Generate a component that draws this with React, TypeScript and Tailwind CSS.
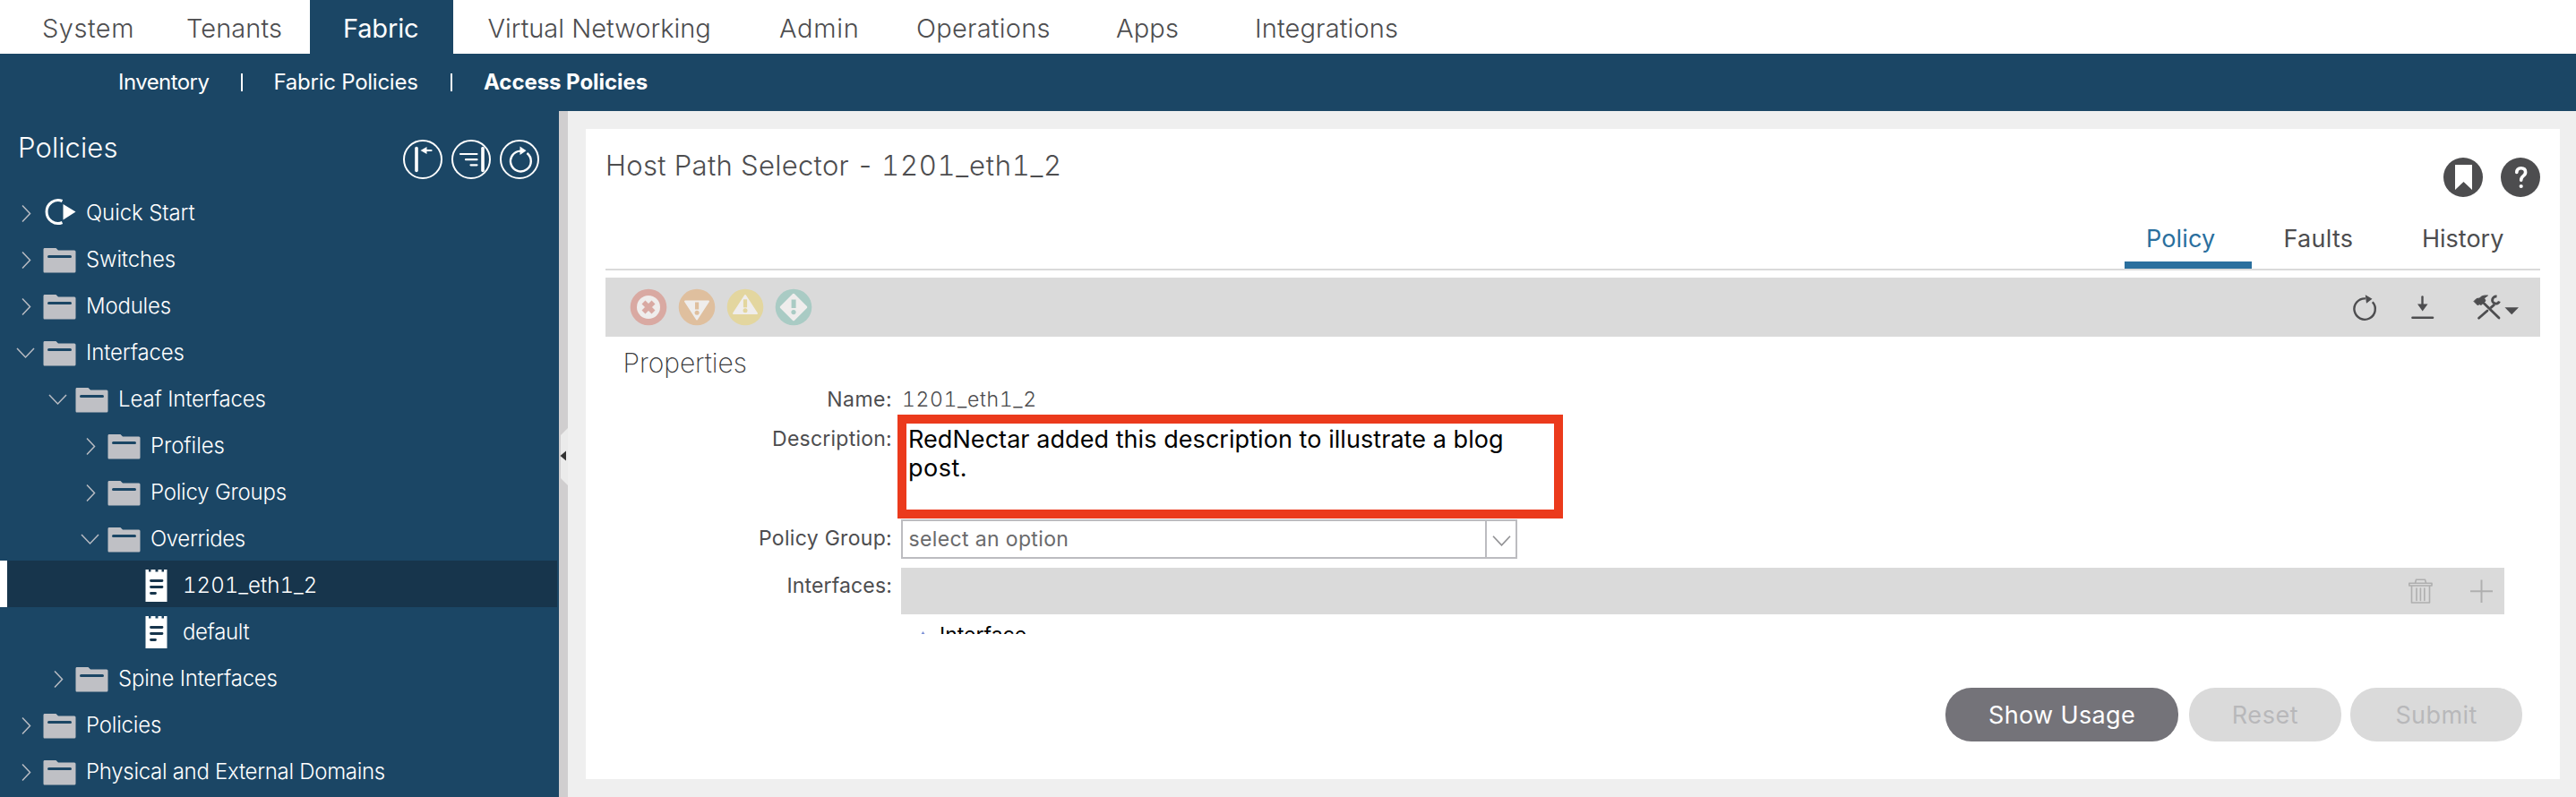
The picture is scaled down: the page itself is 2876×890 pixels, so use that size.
import React from "react";

type Kind = "closed" | "open" | "leaf";

interface TreeNode {
  label: string;
  depth: number;
  kind: Kind;
  icon: "folder" | "start" | "doc";
  selected?: boolean;
  text: string;
}

const NAV = [
  { label: "System", box: "w-[208px] pl-[47px] tracking-[0.5px]" },
  { label: "Tenants", box: "w-[138px] tracking-[0.1px]" },
  { label: "Fabric", box: "w-[160px] mr-[38.5px] pl-[37px] bg-[#1b4665] font-normal text-white tracking-[-0.17px]" },
  { label: "Virtual Networking", box: "w-[325.5px] tracking-[-0.01px]" },
  { label: "Admin", box: "w-[153px] tracking-[0.7px]" },
  { label: "Operations", box: "w-[223px] tracking-[0.24px]" },
  { label: "Apps", box: "w-[155px] tracking-[0.18px]" },
  { label: "Integrations", box: "tracking-[0.15px]" },
];

const TREE: TreeNode[] = [
  { label: "Quick Start", depth: 0, kind: "closed", icon: "start", text: "tracking-[-0.1px]" },
  { label: "Switches", depth: 0, kind: "closed", icon: "folder", text: "tracking-[-0.15px]" },
  { label: "Modules", depth: 0, kind: "closed", icon: "folder", text: "tracking-[-0.2px]" },
  { label: "Interfaces", depth: 0, kind: "open", icon: "folder", text: "tracking-[-0.12px]" },
  { label: "Leaf Interfaces", depth: 1, kind: "open", icon: "folder", text: "tracking-[-0.15px]" },
  { label: "Profiles", depth: 2, kind: "closed", icon: "folder", text: "tracking-[-0.05px]" },
  { label: "Policy Groups", depth: 2, kind: "closed", icon: "folder", text: "tracking-[-0.22px]" },
  { label: "Overrides", depth: 2, kind: "open", icon: "folder", text: "tracking-[-0.36px]" },
  { label: "1201_eth1_2", depth: 3, kind: "leaf", icon: "doc", selected: true, text: "tabular-nums tracking-[0.05px]" },
  { label: "default", depth: 3, kind: "leaf", icon: "doc", text: "tracking-[-0.37px]" },
  { label: "Spine Interfaces", depth: 1, kind: "closed", icon: "folder", text: "tracking-[-0.21px]" },
  { label: "Policies", depth: 0, kind: "closed", icon: "folder", text: "tracking-[-0.2px]" },
  { label: "Physical and External Domains", depth: 0, kind: "closed", icon: "folder", text: "tracking-[-0.29px]" },
];

const INDENT = ["pl-[17.5px]", "pl-[53.5px]", "pl-[89.5px]", "pl-[125.5px]"];

function Chevron({ kind }: { kind: Kind }) {
  return (
    <svg className="h-[22px] w-[22px] shrink-0" viewBox="0 0 22 22" fill="none" stroke="#b9bcc3" strokeWidth="1.5">
      {kind === "closed" && <path d="M7 2.5 L15.5 11.5 L7 20.5" />}
      {kind === "open" && <path d="M1 6 L10.5 16 L20 6" />}
    </svg>
  );
}

function NodeIcon({ icon }: { icon: TreeNode["icon"] }) {
  if (icon === "start")
    return (
      <svg className="h-[38px] w-[37px] shrink-0" viewBox="0 0 37 38">
        <path d="M21.5 5.5 A12.6 13 0 1 0 21.5 29.5" fill="none" stroke="#fff" strokeWidth="3" />
        <path d="M22.5 9 L36.5 17.5 L22.5 26.5 Z" fill="#fff" />
      </svg>
    );
  if (icon === "folder")
    return (
      <svg className="h-[38px] w-[37px] shrink-0" viewBox="0 0 37 38">
        <path d="M1.5 6 H14.5 L17 8.5 H35 Q36.5 8.5 36.5 10 V32 Q36.5 33.5 35 33.5 H1.5 Q0.5 33.5 0.5 32 V7.5 Q0.5 6 1.5 6Z" fill="#bfc0c5" />
        <path d="M6.5 15.5 H30.5" stroke="#1b4665" strokeWidth="3" strokeLinecap="round" />
      </svg>
    );
  return (
    <svg className="h-[38px] w-[37px] shrink-0" viewBox="0 0 37 38">
      <path d="M6.5 1 H10 V3.5 H12.5 V1 H17.5 V3.5 H20.5 V1 H24.5 V3.5 H27 V1 H30.5 V37 H6.5 Z" fill="#fff" />
      <path d="M12.5 13.5 H25 M12.5 20.5 H25 M12.5 27.5 H17.5" stroke="#17354c" strokeWidth="2.8" strokeLinecap="round" />
    </svg>
  );
}

function TreeRow({ node }: { node: TreeNode }) {
  return (
    <div
      className={
        "flex h-[52px] shrink-0 items-center mr-[2px] " +
        (node.selected ? "bg-[#17354c] shadow-[inset_8px_0_0_#fff] " : "") +
        INDENT[node.depth]
      }
    >
      <div className="flex items-center gap-2 pt-[4px]">
        <Chevron kind={node.kind} />
        <NodeIcon icon={node.icon} />
      </div>
      <span className={"whitespace-nowrap pt-[4.5px] text-[24px] font-light leading-none text-white pl-[11.5px] " + node.text}>
        {node.label}
      </span>
    </div>
  );
}

function SidebarTools() {
  return (
    <svg className="h-[44px] w-[152px]" viewBox="0 0 152 44" fill="none" stroke="#fff" strokeWidth="2">
      <circle cx="22" cy="22" r="21" />
      <circle cx="76" cy="22" r="21" />
      <circle cx="130" cy="22" r="21" />
      <path d="M15 9.5 V34.5" strokeWidth="3.6" strokeLinecap="round" />
      <path d="M26 12 H31.5" strokeLinecap="round" strokeWidth="2.2" />
      <path d="M19.5 12 L26.5 8 V16 Z" fill="#fff" stroke="none" />
      <path d="M89 9.5 V34.5" strokeWidth="3.6" strokeLinecap="round" />
      <path d="M64 16 H82.5 M70 22.2 H82.5 M75.5 28.3 H82.5" strokeLinecap="round" strokeWidth="2.2" />
      <path d="M138.4 15 A11.4 11.4 0 1 1 131 12.6" strokeWidth="2.4" />
      <path d="M130.5 7.5 L137.5 12.2 L130.5 17 Z" fill="#fff" stroke="none" />
    </svg>
  );
}

function SeverityIcons() {
  return (
    <svg className="h-[42px] w-[204px]" viewBox="0 0 204 42">
      <g>
        <circle cx="21" cy="21" r="20.3" fill="#d9a9a2" />
        <circle cx="21" cy="21" r="13" fill="#efedec" />
        <path d="M15.5 15.5 L26.5 26.5 M26.5 15.5 L15.5 26.5" stroke="#d9a9a2" strokeWidth="5.6" />
      </g>
      <g>
        <circle cx="75" cy="21" r="20.3" fill="#dfbf9e" />
        <path d="M62 14.5 H88 L75 34.5 Z" fill="#efedec" stroke="#efedec" strokeWidth="2" strokeLinejoin="round" />
        <path d="M73 15.5 H77.2 V23.5 H73 Z" fill="#dfbf9e" />
        <circle cx="75.1" cy="27.2" r="2.5" fill="#dfbf9e" />
      </g>
      <g>
        <circle cx="129" cy="21" r="20.3" fill="#e3d69f" />
        <path d="M129 8 L142 28 H116 Z" fill="#efedec" stroke="#efedec" strokeWidth="2" strokeLinejoin="round" />
        <path d="M126.9 12.3 H131.1 V21.3 H126.9 Z" fill="#e3d69f" />
        <circle cx="129" cy="24.8" r="2.5" fill="#e3d69f" />
      </g>
      <g>
        <circle cx="183" cy="21" r="20.3" fill="#a9cbc4" />
        <path d="M183 7 L197 21 L183 35 L169 21 Z" fill="#efedec" stroke="#efedec" strokeWidth="2.5" strokeLinejoin="round" />
        <path d="M180.6 12.5 H185.6 V22 H180.6 Z" fill="#a9cbc4" />
        <circle cx="183" cy="26.6" r="2.6" fill="#a9cbc4" />
      </g>
    </svg>
  );
}

function ToolbarActions() {
  return (
    <svg className="h-[40px] w-[190px] text-[#4d4d4f]" viewBox="2625 324 190 40">
      <g transform="translate(2627 329.5)">
        <path d="M21.8 8.7 A11.7 11.7 0 1 1 14 4.9" fill="none" stroke="currentColor" strokeWidth="2.4" />
        <path d="M13.8 0.8 L21.5 5.2 L15 10.2 Z" fill="currentColor" />
      </g>
      <path d="M2704.5 332.5 V342" stroke="currentColor" strokeWidth="2.4" strokeLinecap="round" />
      <path d="M2699 340.5 H2710.5 L2704.7 348.5 Z" fill="currentColor" />
      <path d="M2693.5 355.8 H2716" stroke="currentColor" strokeWidth="2.6" strokeLinecap="round" />
      <path d="M2772 338.5 L2790 356" stroke="currentColor" strokeWidth="2.8" strokeLinecap="round" />
      <path d="M2777 348 L2767.5 356.2" stroke="currentColor" strokeWidth="2.8" strokeLinecap="round" />
      <path d="M2785 341 L2780.5 345" stroke="currentColor" strokeWidth="3" />
      <path d="M2762 337.5 L2765 334.5 L2768.5 334 Q2770.5 330.5 2777.5 331 L2773.5 334 L2775 337 L2770 341.5 L2768 340.5 L2766.5 342 Z" fill="currentColor" stroke="currentColor" strokeWidth="1" strokeLinejoin="round" />
      <path d="M2787.5 332.2 A4 4 0 1 0 2790.4 337.4" fill="none" stroke="currentColor" strokeWidth="3" />
      <path d="M2796.5 344.2 H2812 L2804.2 352.3 Z" fill="currentColor" />
    </svg>
  );
}

function RoundButtons() {
  return (
    <div className="flex gap-5">
      <svg className="size-[44px]" viewBox="0 0 44 44">
        <circle cx="22" cy="22" r="22" fill="#4d4d4f" />
        <path d="M13 8 H32 V36 L22.5 27 L13 36 Z" fill="#fff" />
      </svg>
      <svg className="size-[44px]" viewBox="0 0 44 44">
        <circle cx="22" cy="22" r="22" fill="#4d4d4f" />
        <path d="M17.8 16.5 Q18 11.7 22.6 11.7 Q27.6 11.7 27.6 16.2 Q27.6 18.7 25 20.6 Q22.7 22.3 22.7 25.3" fill="none" stroke="#fff" strokeWidth="3.6" strokeLinecap="round" />
        <circle cx="22.7" cy="32" r="2.1" fill="#fff" />
      </svg>
    </div>
  );
}

function Header() {
  return (
    <header className="shrink-0 bg-[#1b4665]">
      <nav className="flex h-[60px] bg-white">
        {NAV.map((n) => (
          <div key={n.label} className={"flex shrink-0 items-center whitespace-nowrap pt-[3px] text-[29px] leading-none " + (n.label === "Fabric" ? "" : "font-light text-[#4d4d4f] ") + n.box}>
            {n.label}
          </div>
        ))}
      </nav>
      <div className="flex h-[64px] items-center whitespace-nowrap pl-[132px] text-[24px] leading-none text-white">
        <span className="w-[137px] tracking-[-0.55px]">Inventory</span>
        <span className="h-5 w-[2px] bg-white" />
        <span className="w-[198px] pl-[34.5px] tracking-[-0.25px]">Fabric Policies</span>
        <span className="ml-[34px] h-5 w-[2px] bg-white" />
        <span className="pl-[35px] font-bold tracking-[-0.05px]">Access Policies</span>
      </div>
    </header>
  );
}

function Sidebar() {
  return (
    <aside className="flex w-[624px] shrink-0 flex-col overflow-hidden bg-[#1b4665]">
      <div className="flex h-[86px] shrink-0 items-start justify-between pl-5 pr-[22px] text-white">
        <span className="pt-[25px] text-[31px] font-light leading-none tracking-[0.1px]">Policies</span>
        <div className="pt-8">
          <SidebarTools />
        </div>
      </div>
      {TREE.map((n, i) => (
        <TreeRow key={i} node={n} />
      ))}
    </aside>
  );
}

function Splitter() {
  return (
    <div className="w-[10px] shrink-0 bg-[#d0cecf] pt-[353px]">
      <svg className="h-[66px] w-[10px]" viewBox="0 0 10 66">
        <path d="M2 9 L10 1 V65 L2 57 Z" fill="#ebebeb" />
        <path d="M8 26.5 L1.5 32 L8 37.5 Z" fill="#333" />
      </svg>
    </div>
  );
}

function Tabs() {
  return (
    <div className="flex items-start justify-end whitespace-nowrap border-b-2 border-[#dadada] text-[27px] leading-none text-[#4d4d4f]">
      <div className="h-[48px] w-[142px] border-b-8 border-[#2a6f9e] pl-[24px] pt-px text-[#2a6f9e] tracking-[0.15px]">Policy</div>
      <div className="w-[190px] pl-[35.5px] pt-px tracking-[0.28px]">Faults</div>
      <div className="w-[132px] pt-px">History</div>
    </div>
  );
}

const LABEL = "w-[320px] shrink-0 text-right text-[23px] leading-none text-[#4d4d4f] ";

function Properties() {
  return (
    <section className="flex h-[332px] flex-col overflow-hidden">
      <h2 className="h-[58px] shrink-0 pl-[19.5px] pt-[14px] text-[30px] font-extralight leading-none tracking-[-0.05px] text-[#3a3a3c]">Properties</h2>
      <div className="flex h-[29px] shrink-0 whitespace-nowrap">
        <div className={LABEL + "pt-px tracking-[0.45px]"}>Name:</div>
        <div className="pl-[11px] pt-px text-[23px] font-light leading-none text-[#4d4d4f] tabular-nums tracking-[0.65px]">1201_eth1_2</div>
      </div>
      <div className="flex h-[116px] shrink-0">
        <div className={LABEL + "pt-[16px] tracking-[0.24px]"}>Description:</div>
        <div className="ml-[6px] h-[116px] w-[743px] border-10 border-[#eb3a1c] bg-white pl-[2px] pt-[2px] text-[27px] leading-[32px] tracking-[0.06px] text-black">
          RedNectar added this description to illustrate a blog
          <br />
          <span className="tracking-[0.5px]">post.</span>
        </div>
      </div>
      <div className="mt-px flex h-[54px] shrink-0">
        <div className={LABEL + "pt-[9.5px] tracking-[0.3px]"}>Policy Group:</div>
        <div className="ml-[10px] flex h-[44px] w-[688px] border-2 border-[#bcbcc0] bg-white">
          <div className="grow pl-[6.5px] pt-[9px] text-[23px] leading-none tracking-[0.36px] text-[#6a6a6c]">select an option</div>
          <div className="flex w-[34px] items-center justify-center border-l-2 border-[#bcbcc0]">
            <svg className="mt-[4px] h-[12px] w-[21px]" viewBox="0 0 21 12" fill="none" stroke="#909093" strokeWidth="1.6">
              <path d="M1 0.8 L10.5 10.8 L20 0.8" />
            </svg>
          </div>
        </div>
      </div>
      <div className="flex grow">
        <div className={LABEL + "pt-[9px] tracking-[0.15px]"}>Interfaces:</div>
        <div className="ml-[10px] w-[1790px]">
          <div className="flex h-[52px] items-start justify-end bg-[#dadada] pr-[12px] pt-[12px]">
            <svg className="h-[28px] w-[96px]" viewBox="0 0 96 28" fill="none" stroke="#afafaf" strokeWidth="1.6">
              <path d="M1.8 5.2 H27 V8 H1.8 Z M8.5 5 L9.5 1.2 H19.5 L20.5 5 M4.5 8.2 V27 H24.5 V8.2" strokeLinejoin="round" />
              <path d="M10 11 V24.5 M14.4 11 V24.5 M18.8 11 V24.5" strokeLinecap="round" />
              <path d="M70 14.3 H95 M82.5 1.5 V27" strokeWidth="2" />
            </svg>
          </div>
          <div className="flex items-start pl-[20px] pt-[12px]">
            <svg className="mt-[7px] h-[8px] w-[9px]" viewBox="0 0 9 8">
              <path d="M4.5 0 L9 7 H0 Z" fill="#7a8fd6" />
            </svg>
            <span className="pl-[14px] text-[23px] leading-none text-black">Interface</span>
          </div>
        </div>
      </div>
    </section>
  );
}

function Footer() {
  return (
    <div className="flex h-[60px] items-center whitespace-nowrap pl-[1496px] text-[27px] leading-none">
      <button className="flex h-full w-[260px] items-center justify-center rounded-[29px] bg-[#747379] tracking-[0.36px] text-white">Show Usage</button>
      <button className="ml-3 flex h-full w-[170px] items-center justify-center rounded-[29px] bg-[#dadada] tracking-[0.57px] text-[#b8b8ba]">Reset</button>
      <button className="ml-[10px] flex h-full w-[192px] items-center justify-center rounded-[29px] bg-[#dadada] tracking-[0.4px] text-[#b8b8ba]">Submit</button>
    </div>
  );
}

function MainCard() {
  return (
    <main className="flex h-[726px] w-[2204px] flex-col bg-white pl-[22px] pr-[22px]">
      <div className="flex h-[108px] shrink-0 items-start justify-between">
        <h1 className="whitespace-nowrap pt-[25px] text-[31px] font-light leading-none text-[#4d4d4f]">
          <span className="tracking-[0.3px]">Host Path Selector </span>
          <span className="pl-[2px] pr-[6px]">-</span>
          <span className="pl-[5px] tabular-nums tracking-[0.75px]">1201_eth1_2</span>
        </h1>
        <div className="pt-8">
          <RoundButtons />
        </div>
      </div>
      <Tabs />
      <div className="mt-2 flex h-[66px] shrink-0 items-center justify-between bg-[#dadada] pl-[27px] pr-[21px]">
        <SeverityIcons />
        <ToolbarActions />
      </div>
      <Properties />
      <div className="mt-[60px]">
        <Footer />
      </div>
    </main>
  );
}

export default function App() {
  return (
    <div className="flex h-[890px] w-[2876px] flex-col overflow-hidden bg-[#efefef] font-['Inter',sans-serif]">
      <Header />
      <div className="flex min-h-0 grow">
        <Sidebar />
        <Splitter />
        <div className="pl-5 pt-5">
          <MainCard />
        </div>
      </div>
    </div>
  );
}
